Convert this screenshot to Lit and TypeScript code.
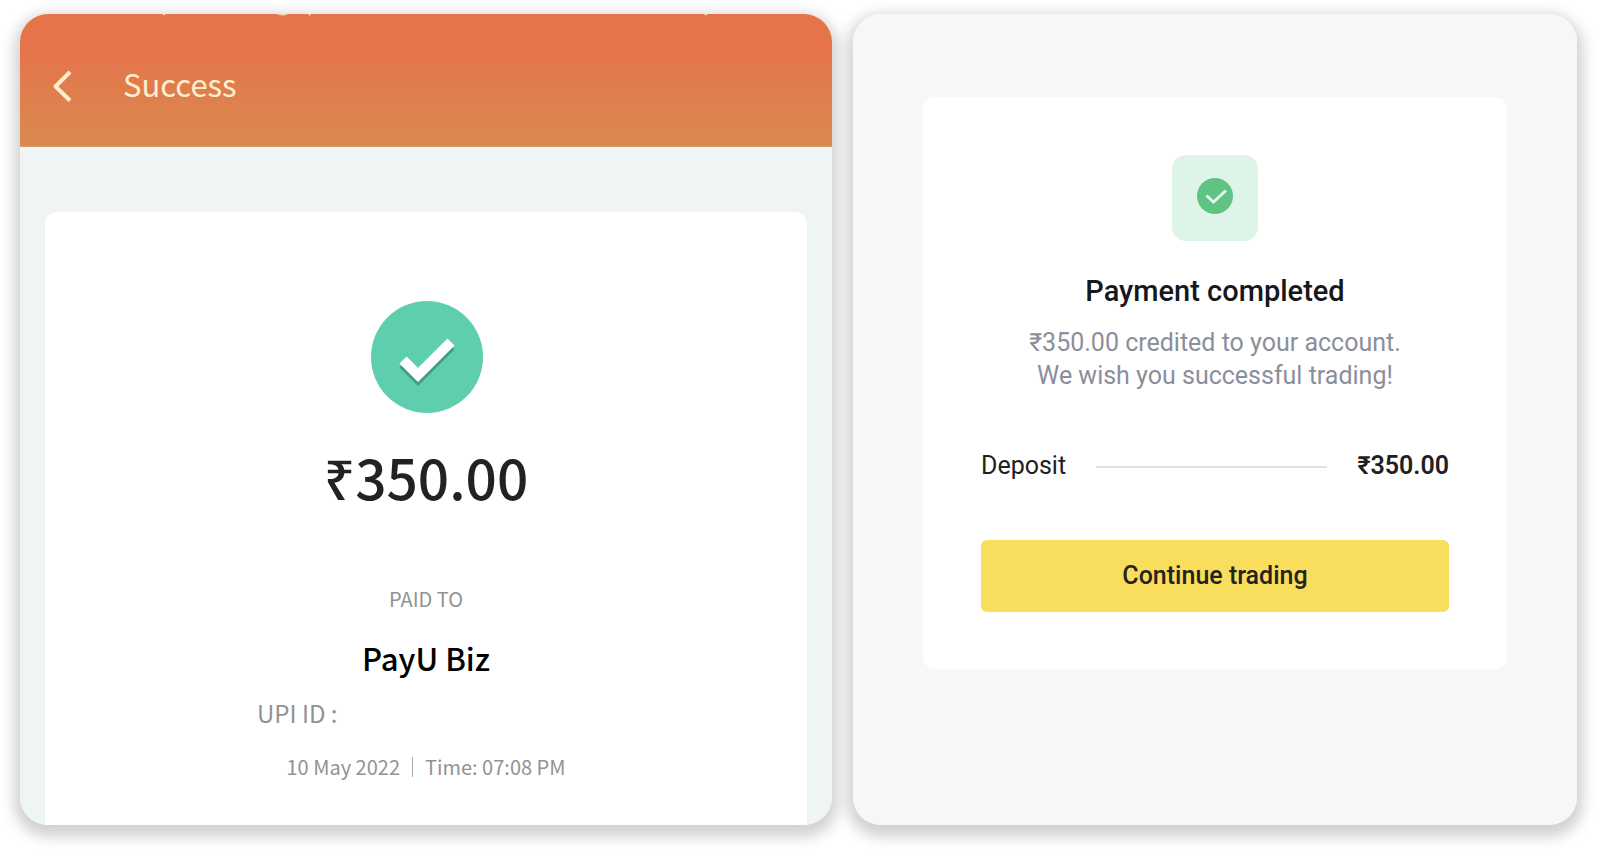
import { LitElement, html, css } from "lit";
import { customElement, property } from "lit/decorators.js";

@customElement("receipt-panel")
class ReceiptPanel extends LitElement {
  @property() amount = "";

  static styles = css`
    :host {
      display: flex;
      flex-direction: column;
      overflow: hidden;
      background: #eff4f5;
      font-family: "Noto Sans CJK SC", "Noto Sans", sans-serif;
      color: #929292;
    }
    .bar {
      position: relative;
      box-sizing: border-box;
      height: 133px;
      flex: none;
      display: flex;
      align-items: center;
      gap: 50px;
      padding: 12px 32px 0;
      background: linear-gradient(#e5744b 25%, #da894f);
      border-bottom: 1px solid #d3a06f;
      color: #fdeed0;
    }
    .status {
      position: absolute;
      top: 0;
      left: 0;
    }
    .back {
      display: flex;
      padding: 0;
      border: 0;
      background: none;
      color: inherit;
    }
    .heading {
      margin: 0;
      padding-bottom: 4px;
      font-size: 31px;
      line-height: 40px;
      font-weight: 400;
    }
    .card {
      flex: 1;
      margin: 65px 25px 0;
      padding: 88px 24px 0;
      border-radius: 12px 12px 0 0;
      background: #fff;
      display: flex;
      flex-direction: column;
      align-items: center;
    }
    .badge {
      display: block;
    }
    .amount {
      margin: 22px 0 0;
      font-size: 55px;
      line-height: 80px;
      font-weight: 500;
      color: #222;
    }
    .label {
      margin: 67px 0 0;
      font-size: 20px;
      line-height: 32px;
    }
    .payee {
      margin: 23px 0 0;
      font-size: 31px;
      line-height: 40px;
      font-weight: 500;
      color: #000;
    }
    .upi {
      align-self: stretch;
      margin: 15px 0 0;
      padding-left: 188px;
      font-size: 24px;
      line-height: 40px;
    }
    .when {
      display: flex;
      align-items: center;
      gap: 12px;
      margin: 18px 0 0;
      font-size: 20px;
      line-height: 32px;
    }
    .rule {
      width: 1px;
      height: 20px;
      background: #aaa;
    }
  `;

  render() {
    return html`
      <header class="bar">
        <svg class="status" width="700" height="3" viewBox="0 0 700 3" fill="#f6cfae" aria-hidden="true">
          <path d="M142 0h4l-2 1.500zM257 0h11q-5 3-11 0zM288 0h3l-1 2zM683 0h5l-2 1.500z" />
        </svg>
        <button class="back" aria-label="Back">
          <svg width="21" height="32" viewBox="0 0 21 32" fill="none" stroke="currentColor" stroke-width="4" stroke-linejoin="round">
            <path d="M18 2 3.500 16.500l14.500 14" />
          </svg>
        </button>
        <h1 class="heading">Success</h1>
      </header>
      <section class="card">
        <svg class="badge" width="114" height="114" viewBox="0 0 114 114" aria-hidden="true">
          <circle cx="58" cy="57" r="56" fill="#5fceaf" />
          <g fill="none" stroke-width="10">
            <path d="M34 64l15 15 33-33" stroke="#469b85" />
            <path d="M34 60l15 15 33-33" stroke="#fff" />
          </g>
        </svg>
        <p class="amount">${this.amount}</p>
        <p class="label">PAID TO</p>
        <h2 class="payee">PayU Biz</h2>
        <p class="upi">UPI ID :</p>
        <p class="when"><span>10 May 2022</span><span class="rule"></span><span>Time: 07:08 PM</span></p>
      </section>
    `;
  }
}

@customElement("deposit-panel")
class DepositPanel extends LitElement {
  @property() amount = "";

  static styles = css`
    :host {
      display: block;
      box-sizing: border-box;
      overflow: hidden;
      padding: 83px 70px 0;
      background: #f5f8f7;
      font-family: Roboto, "Liberation Sans", sans-serif;
      color: #1f2024;
    }
    .card {
      padding: 58px 58px 57px;
      border-radius: 12px;
      background: #fff;
      text-align: center;
    }
    .tile {
      box-sizing: border-box;
      width: 86px;
      height: 86px;
      margin: 0 auto;
      padding-top: 23px;
      border-radius: 14px;
      background: #dff4e9;
    }
    .tick {
      display: block;
      margin: 0 auto;
    }
    .title {
      margin: 34px 0 0;
      font-size: 29px;
      line-height: 32px;
      font-weight: 500;
      color: #17181c;
    }
    .note {
      margin: 19px 0 0;
      font-size: 25px;
      line-height: 33px;
      color: #8b8e9b;
    }
    .row {
      display: flex;
      align-items: center;
      gap: 30px;
      margin: 58px 0 0;
      font-size: 25px;
      line-height: 32px;
    }
    .line {
      flex: 1;
      height: 2px;
      margin-top: 2px;
      background: #e1e1e1;
    }
    .sum {
      font-weight: 600;
    }
    .go {
      display: block;
      width: 100%;
      height: 72px;
      margin: 58px 0 0;
      padding: 0 16px;
      border: 0;
      border-radius: 6px;
      background: #f9de5d;
      font: 500 25px/32px Roboto, "Liberation Sans", sans-serif;
      color: #24241f;
    }
  `;

  render() {
    return html`
      <section class="card">
        <div class="tile">
          <svg class="tick" width="36" height="36" viewBox="0 0 36 36" aria-hidden="true">
            <circle cx="18" cy="18" r="18" fill="#5fc483" />
            <path d="M9.500 17.500l7 6.500L29 12.500" fill="none" stroke="#e4f6ec" stroke-width="3" />
          </svg>
        </div>
        <h2 class="title">Payment completed</h2>
        <p class="note">${this.amount} credited to your account.<br />We wish you successful trading!</p>
        <div class="row">
          <span>Deposit</span><span class="line"></span><span class="sum">${this.amount}</span>
        </div>
        <button class="go">Continue trading</button>
      </section>
    `;
  }
}

@customElement("app-root")
class AppRoot extends LitElement {
  static styles = css`
    :host {
      display: grid;
      grid-template-columns: 812fr 724fr;
      gap: 21px;
      box-sizing: border-box;
      min-height: 100vh;
      padding: 14px 23px 28px 20px;
      background: #fff;
    }
    .panel {
      border-radius: 28px;
    }
    .shade {
      border-radius: 28px;
      display: grid;
      box-shadow: 0 6px 14px 6px rgba(0, 0, 0, 0.18);
    }
    .shade:first-of-type {
      clip-path: inset(-30px -21px -30px -30px);
    }
    .panel {
      position: relative;
      z-index: 1;
    }
  `;

  render() {
    return html`
      <div class="shade"><receipt-panel class="panel" amount="₹350.00"></receipt-panel></div>
      <div class="shade"><deposit-panel class="panel" amount="₹350.00"></deposit-panel></div>
    `;
  }
}
